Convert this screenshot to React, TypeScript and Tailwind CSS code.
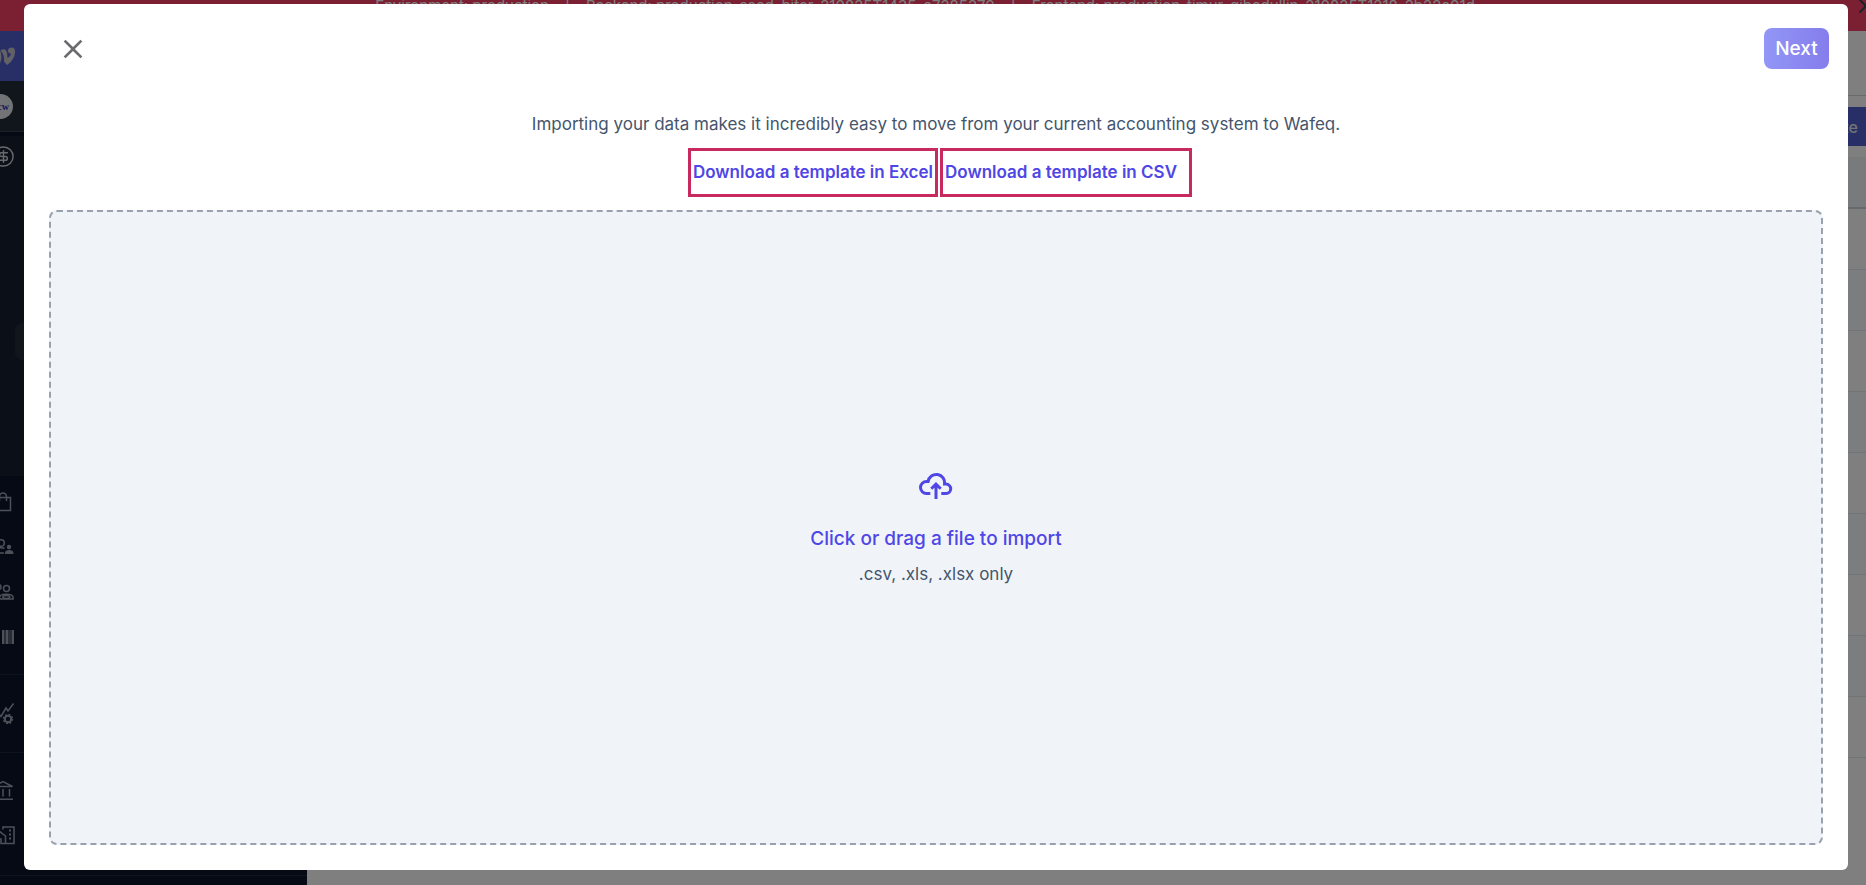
import type { ReactNode } from 'react';
import { CircleDollarSign, X } from 'lucide-react';
import { MdClose } from 'react-icons/md';

const font = "font-['Inter','Liberation_Sans',sans-serif]";

const buildInfo = [
    'Environment: production',
    'Backend: production_seed_biter_210825T1435_e7285270',
    'Frontend: production_timur_gibadullin_210825T1218_2b22e01d',
];

interface NavItem {
    label: string;
    icon: ReactNode;
}

function StrokeIcon({ children }: { children: ReactNode }) {
    return (
        <svg width="24" height="24" viewBox="0 0 24 24" fill="none" stroke="currentColor" strokeWidth="1.5" aria-hidden="true">
            {children}
        </svg>
    );
}

const BagIcon = (
    <StrokeIcon>
        <path d="M3 7.5h16.500v13H3zM8.500 11V6.500a3.500 3.500 0 0 1 7 0V11" />
    </StrokeIcon>
);

const CustomersIcon = (
    <StrokeIcon>
        <circle cx="10" cy="8" r="3.3" />
        <path d="M13.5 13.300c-1.300-.4-2.600-.6-4-.6-3.300 0-6.500 1.300-6.500 3.500v1.800h10" />
        <circle cx="18" cy="12" r="2.200" fill="currentColor" stroke="none" />
        <path d="M14 19v-1.200c0-1.900 1.900-2.900 4.200-2.900s4.200 1 4.200 2.900V19z" fill="currentColor" stroke="none" />
    </StrokeIcon>
);

const TeamIcon = (
    <StrokeIcon>
        <circle cx="7.500" cy="7" r="2.500" />
        <circle cx="15.500" cy="8.500" r="3" />
        <path d="M8.500 19v-1.500c0-2 3-3.200 6.800-3.200s6.800 1.200 6.800 3.200V19z" />
        <ellipse cx="15.300" cy="17" rx="3.500" ry="1.500" />
    </StrokeIcon>
);

const BarcodeIcon = (
    <svg width="24" height="24" viewBox="0 0 24 24" fill="currentColor" aria-hidden="true">
        <path d="M2 5h2v14H2zM5 5h1v14H5zM7.500 5h1v14h-1zM11 5h2.500v14H11zM14.500 5h3v14h-3zM18.500 5h1v14h-1zM20.500 5H23v14h-2.500z" />
    </svg>
);

const ReportsIcon = (
    <StrokeIcon>
        <path d="M2 15.500l5-5 3 4 5-8.500 2 3 5.500-7.500" />
        <circle cx="17" cy="17" r="3.200" strokeWidth="2" />
        <circle cx="17" cy="17" r="4.500" strokeWidth="1.500" strokeDasharray="1.800 1.734" />
    </StrokeIcon>
);

const BankIcon = (
    <StrokeIcon>
        <path d="M3 8.500l9-5 9.500 5zM6 11v7.500M12 11v7.500M18.500 11v7.500M2.500 21.200h19.500" />
    </StrokeIcon>
);

const BuildingIcon = (
    <StrokeIcon>
        <path d="M12 6.500V4h11v16.500h-8.500M1.500 20.500V13L8 8l6.500 5v7.500H10V16H6.500v4.500z" />
        <path d="M18 7.500h2M18 11.500h2M18 15.500h2" strokeWidth="2" />
    </StrokeIcon>
);

const navSections: NavItem[][] = [
    [
        { label: 'Purchases', icon: BagIcon },
        { label: 'Contacts', icon: CustomersIcon },
        { label: 'Team', icon: TeamIcon },
        { label: 'Items', icon: BarcodeIcon },
    ],
    [{ label: 'Reports', icon: ReportsIcon }],
    [
        { label: 'Banking', icon: BankIcon },
        { label: 'Assets', icon: BuildingIcon },
    ],
];

function Sidebar() {
    return (
        <aside className="w-[327px] shrink-0 bg-[#0c1428] text-gray-400">
            <div className="flex h-[50px] items-center bg-[#505fcc] pl-2 text-[#c4c4cc]">
                <svg width="28" height="19" viewBox="0 0 28 19" fill="currentColor" aria-hidden="true">
                    <path d="M0 3c3-2 5-1 6 2l2.500 7c.8-3 .8-6-.5-9 3-1 4.500.5 5 3.500.7 4 .7 8-2.500 11.500C5 18 2 12 0 3z" />
                    <path d="M12.500 3.500C15.500 1 18.500 2 19 6l.5 5c2.500-1.500 3.500-3 3.300-4.300C20.500 6 19.500 4.500 20 3c.6-2 2.500-2.700 4-2.500 2.500.4 3.200 2.500 3 5-.4 5-3.500 9.500-8 12.500l-3-3.500c.8-4-.5-8-3.500-11z" />
                </svg>
            </div>
            <div className="flex h-[51px] items-center border-b border-gray-700 bg-[#222c3a] pl-2">
                <span className="flex size-[25px] items-center justify-end rounded-full bg-gray-200 pr-1 font-['Liberation_Serif',serif] text-[10px] font-bold text-indigo-800">
                    cw
                </span>
            </div>
            <div className="h-[344px] border-t-4 border-[#0c1428] bg-[#171f2e]">
                <a href="#sales" aria-label="Sales" className="flex h-[41px] items-center pl-3 text-gray-300">
                    <CircleDollarSign size={23} strokeWidth={1.5} />
                </a>
                <div className="mt-[146px] mr-4 ml-[35px] h-[37px] rounded-lg bg-[#222c3a]" />
            </div>
            <nav>
                {navSections.map((items) => (
                    <div
                        key={items[0].label}
                        className="border-b border-slate-800 py-4 first:pt-[3px] first:pb-[15px] last:pt-[14px] last:pb-[18px]"
                    >
                        {items.map((item) => (
                            <a key={item.label} href="#nav" aria-label={item.label} className="flex h-[45px] items-center pl-[11px]">
                                {item.icon}
                            </a>
                        ))}
                    </div>
                ))}
            </nav>
        </aside>
    );
}

function Background() {
    return (
        <div className="-mt-[19px] -mr-3 -ml-5 flex min-h-[calc(100vh+19px)] flex-col bg-white">
            <div className="grid h-[50px] grid-cols-[1fr_auto_1fr] items-center bg-[#f64064] text-white">
                <div className="col-start-2 flex gap-4 pr-2 text-[15px] whitespace-nowrap">
                    {buildInfo.map((text, i) => (
                        <span key={text} className="flex gap-4">
                            {i > 0 && <span>|</span>}
                            {text}
                        </span>
                    ))}
                </div>
                <button type="button" aria-label="Dismiss" className="justify-self-end text-gray-700">
                    <X size={24} strokeWidth={2} />
                </button>
            </div>
            <div className="flex flex-1">
                <Sidebar />
                <main className="flex-1">
                    <div className="h-[65px] border-b border-gray-300" />
                    <div className="flex justify-end py-[11px]">
                        <button type="button" className="h-[39px] bg-[#505fcc] px-5 text-base font-medium text-gray-200">
                            Create
                        </button>
                    </div>
                    <div className="h-[52px] border-b-2 border-slate-300 bg-slate-100" />
                    {Array.from({ length: 9 }, (_, i) => (
                        <div key={i} className="h-[61px] border-b border-slate-200 odd:bg-slate-50 even:bg-white" />
                    ))}
                </main>
            </div>
        </div>
    );
}

function CloudUploadIcon() {
    return (
        <svg width="34" height="27" viewBox="0 0 34 27" fill="none" stroke="currentColor" strokeWidth="3" aria-hidden="true">
            <path d="M11.300 21.500H7.500a6 6 0 0 1 0-12h1.600a8.200 8.200 0 0 1 16.500 2.600h1.400a4.700 4.700 0 0 1 0 9.400H22.300" />
            <path d="M17 27V12M12.300 16.700L17 12l4.700 4.700" />
        </svg>
    );
}

function ImportDialog() {
    return (
        <div
            role="dialog"
            aria-modal="true"
            aria-label="Import"
            className="flex flex-1 flex-col rounded-md bg-white px-[25px] pb-[25px]"
        >
            <header className="-mr-1.5 flex h-[89px] items-center justify-between pl-2">
                <button type="button" aria-label="Close" className="text-[#6b6b70]">
                    <MdClose size={32} />
                </button>
                <button
                    type="button"
                    className="h-[41px] w-[65px] rounded-lg bg-linear-to-r from-[#9296f6] to-[#857dec] pt-0.5 text-[19px] font-medium text-white"
                >
                    Next
                </button>
            </header>
            <p className="mt-[17px] text-center text-[17px] leading-7 text-slate-600">
                Importing your data makes it incredibly easy to move from your current accounting system to Wafeq.
            </p>
            <div className="mt-[10px] flex justify-center gap-[2px] pl-2 text-[17px] font-semibold text-[#4f46e5]">
                <a href="#excel" className="flex h-[49px] items-center border-[3px] border-[#c8295f] px-[2px]">
                    Download a template in Excel
                </a>
                <a href="#csv" className="flex h-[49px] items-center border-[3px] border-[#c8295f] pr-3 pl-[2px]">
                    Download a template in CSV
                </a>
            </div>
            <label className="mt-[13px] flex flex-1 cursor-pointer flex-col items-center justify-center rounded-lg border-2 border-dashed border-gray-400 bg-[#f0f4f9] pt-1">
                <input type="file" accept=".csv,.xls,.xlsx" className="sr-only" />
                <span className="text-[#4f46e5]">
                    <CloudUploadIcon />
                </span>
                <span className="mt-[26px] text-[19px] leading-7 font-medium text-[#4f46e5]">Click or drag a file to import</span>
                <span className="mt-[7px] text-[17px] leading-7 text-slate-600">.csv, .xls, .xlsx only</span>
            </label>
        </div>
    );
}

export default function App() {
    return (
        <div className={`${font} h-screen overflow-hidden`}>
            <Background />
            <div className="fixed inset-0 flex bg-black/50 pt-1 pr-[18px] pb-[15px] pl-6">
                <ImportDialog />
            </div>
        </div>
    );
}
